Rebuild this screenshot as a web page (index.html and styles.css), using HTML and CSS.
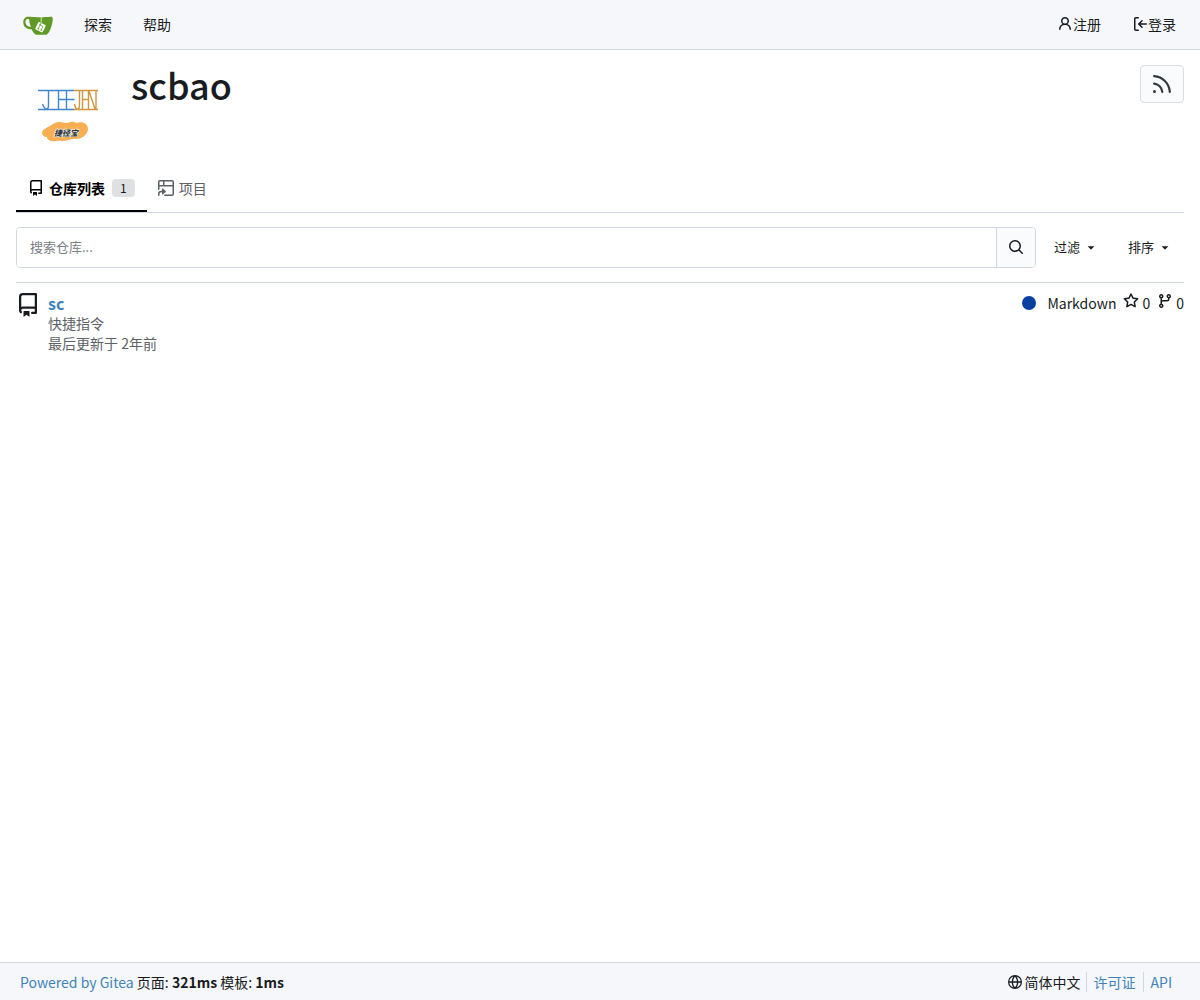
FILE: index.html
```html
<!DOCTYPE html>
<html lang="zh-CN">
  <head>
    <meta charset="utf-8">
    <meta name="viewport" content="width=device-width, initial-scale=1">
    <title>scbao - Gitea</title>
    <link rel="stylesheet" href="styles.css">
  </head>
  <body>
    <nav class="navbar" aria-label="导航栏">
      <div class="navbar-left">
        <a class="logo" href="#" aria-label="首页">
          <svg width="30" height="30" viewBox="0 0 640 640" aria-hidden="true">
            <path fill="#fff" d="m395.9 484.2-126.9-61c-12.5-6-17.9-21.2-11.8-33.8l61-126.9c6-12.5 21.2-17.9 33.8-11.8 17.2 8.3 27.1 13 27.1 13l-.1-109.2 16.7-.1.1 117.1s57.4 24.2 83.1 40.1c3.7 2.3 10.2 6.8 12.9 14.4 2.1 6.1 2 13.1-1 19.3l-61 126.9c-6.2 12.7-21.4 18.1-33.9 12"/>
            <path fill="#609926" d="M622.7 149.8c-4.1-4.1-9.6-4-9.6-4s-117.2 6.6-177.9 8c-13.3.3-26.5.6-39.6.7v117.2c-5.5-2.6-11.1-5.3-16.6-7.9 0-36.4-.1-109.2-.1-109.2-29 .4-89.2-2.2-89.2-2.2s-141.4-7.1-156.8-8.5c-9.8-.6-22.5-2.1-39 1.5-8.7 1.8-33.5 7.4-53.8 26.9C-4.9 212.4 6.6 276.2 8 285.8c1.7 11.7 6.9 44.2 31.7 72.5 45.8 56.1 144.4 54.8 144.4 54.8s12.1 28.9 30.6 55.5c25 33.1 50.7 58.9 75.7 62 63 0 188.9-.1 188.9-.1s12 .1 28.3-10.3c14-8.5 26.5-23.4 26.5-23.4S547 483 565 451.5c5.5-9.7 10.1-19.1 14.1-28 0 0 55.2-117.1 55.2-231.1-1.1-34.5-9.6-40.6-11.6-42.6M125.6 353.9c-25.9-8.5-36.9-18.7-36.9-18.7S69.6 321.8 60 295.4c-16.5-44.2-1.4-71.2-1.4-71.2s8.4-22.5 38.5-30c13.8-3.7 31-3.1 31-3.1s7.1 59.4 15.7 94.2c7.2 29.2 24.8 77.7 24.8 77.7s-26.1-3.1-43-9.1m300.3 107.6s-6.1 14.5-19.6 15.4c-5.8.4-10.3-1.2-10.3-1.2s-.3-.1-5.3-2.1l-112.9-55s-10.9-5.7-12.8-15.6c-2.2-8.1 2.7-18.1 2.7-18.1L322 273s4.8-9.7 12.2-13c.6-.3 2.3-1 4.5-1.5 8.1-2.1 18 2.8 18 2.8L467.4 315s12.6 5.7 15.3 16.2c1.9 7.4-.5 14-1.8 17.2-6.3 15.4-55 113.1-55 113.1"/>
            <path fill="#609926" d="M326.8 380.1c-8.2.1-15.4 5.8-17.3 13.8s2 16.3 9.1 20c7.7 4 17.5 1.8 22.7-5.4 5.1-7.1 4.3-16.9-1.8-23.1l24-49.1c1.5.1 3.7.2 6.2-.5 4.1-.9 7.1-3.6 7.1-3.6 4.2 1.8 8.6 3.8 13.2 6.1 4.8 2.4 9.3 4.9 13.4 7.3.9.5 1.8 1.1 2.8 1.9 1.6 1.3 3.4 3.1 4.7 5.5 1.9 5.5-1.9 14.9-1.9 14.9-2.3 7.6-18.4 40.6-18.4 40.6-8.1-.2-15.3 5-17.7 12.5-2.6 8.1 1.1 17.3 8.9 21.3s17.4 1.7 22.5-5.3c5-6.8 4.6-16.3-1.1-22.6 1.9-3.7 3.7-7.4 5.6-11.3 5-10.4 13.5-30.4 13.5-30.4.9-1.7 5.7-10.3 2.7-21.3-2.5-11.4-12.6-16.7-12.6-16.7-12.2-7.9-29.2-15.2-29.2-15.2s0-4.1-1.1-7.1c-1.1-3.1-2.8-5.1-3.9-6.3 4.7-9.7 9.4-19.3 14.1-29-4.1-2-8.1-4-12.2-6.1-4.8 9.8-9.7 19.7-14.5 29.5-6.7-.1-12.9 3.5-16.1 9.4-3.4 6.3-2.7 14.1 1.9 19.8z"/>
          </svg>
        </a>
        <a class="nav-item" href="#">探索</a>
        <a class="nav-item" href="#">帮助</a>
      </div>
      <div class="navbar-right">
        <a class="nav-item" href="#">
          <svg class="icon" viewBox="0 0 16 16" width="16" height="16" aria-hidden="true"><path d="M10.561 8.073a6 6 0 0 1 3.432 5.142.75.75 0 1 1-1.498.07 4.5 4.5 0 0 0-8.99 0 .75.75 0 0 1-1.498-.07 6 6 0 0 1 3.431-5.142 3.999 3.999 0 1 1 5.123 0M10.5 5a2.5 2.5 0 1 0-5 0 2.5 2.5 0 0 0 5 0"/></svg>
          注册
        </a>
        <a class="nav-item" href="#">
          <svg class="icon" viewBox="0 0 16 16" width="16" height="16" aria-hidden="true"><path d="M2 2.75C2 1.784 2.784 1 3.75 1h2.5a.75.75 0 0 1 0 1.5h-2.5a.25.25 0 0 0-.25.25v10.5c0 .138.112.25.25.25h2.5a.75.75 0 0 1 0 1.5h-2.5A1.75 1.75 0 0 1 2 13.25Zm6.56 4.5h5.69a.75.75 0 0 1 0 1.5H8.56l1.97 1.97a.749.749 0 0 1-.326 1.275.75.75 0 0 1-.734-.215L6.22 8.53a.75.75 0 0 1 0-1.06l3.25-3.25a.749.749 0 0 1 1.275.326.75.75 0 0 1-.215.734Z"/></svg>
          登录
        </a>
      </div>
    </nav>

    <main class="container">
      <header class="org-header">
        <svg class="avatar" width="100" height="100" viewBox="0 0 100 100" role="img" aria-label="scbao">
          <g fill="none" stroke-width="1.4">
            <path stroke="#3f86cf" d="M22 25.500h36M22 44.500h36M32.500 26v14q0 4-2 4t-4-5M42.500 26v18M50.500 26v18M42.500 34.500h16"/>
            <path stroke="#cf963f" d="M58 25.500h24M58 44.500h24M63.500 26v14q0 4-2 4t-3-5M66.500 26v18M72.500 26v18M66.500 34.500h6M73 26l6 18M80 26v18"/>
          </g>
          <path fill="#f8ae52" d="M26 68c0-4 7-6 11-9 6-4 10-1 14-1 5-1 6-2 9 0 6-2 12 0 12 6 0 5-6 10-12 10-4 0-5 0-8 1-5 2-9 0-12 1-5 1-9-1-9-4-3 0-5-2-5-4z"/>
          <text class="avatar-text" x="38" y="71">捷径宝</text>
        </svg>
        <h1>scbao</h1>
        <a class="rss-button" href="#" aria-label="RSS 订阅">
          <svg class="icon" viewBox="0 0 16 16" width="24" height="24" aria-hidden="true"><path d="M2.002 2.725a.75.75 0 0 1 .797-.699C8.79 2.42 13.58 7.21 13.974 13.201a.75.75 0 0 1-1.497.098 10.502 10.502 0 0 0-9.776-9.776.747.747 0 0 1-.7-.798ZM2.84 7.05h-.002a7.002 7.002 0 0 1 6.113 6.111.75.75 0 0 1-1.49.178 5.503 5.503 0 0 0-4.8-4.8.75.75 0 0 1 .179-1.489ZM2 13a1 1 0 1 1 2 0 1 1 0 0 1-2 0"/></svg>
        </a>
      </header>

      <nav class="tabs" aria-label="组织">
        <a class="tab active" href="#">
          <svg class="icon" viewBox="0 0 16 16" width="16" height="16" aria-hidden="true"><path d="M2 2.500A2.500 2.500 0 0 1 4.500 0h8.750a.75.75 0 0 1 .75.75v12.500a.75.75 0 0 1-.75.75h-2.500a.75.75 0 0 1 0-1.500h1.750v-2h-8a1 1 0 0 0-.714 1.700.75.75 0 1 1-1.072 1.050A2.500 2.500 0 0 1 2 11.500Zm10.500-1h-8a1 1 0 0 0-1 1v6.708A2.500 2.500 0 0 1 4.500 9h8ZM5 12.250a.25.25 0 0 1 .25-.25h3.500a.25.25 0 0 1 .25.25v3.250a.25.25 0 0 1-.4.200l-1.450-1.087a.25.25 0 0 0-.300 0L5.400 15.700a.25.25 0 0 1-.400-.200Z"/></svg>
          仓库列表 <span class="count">1</span>
        </a>
        <a class="tab" href="#">
          <svg class="icon" viewBox="0 0 16 16" width="16" height="16" aria-hidden="true"><path d="M1.750 0h12.500C15.216 0 16 .784 16 1.750v12.500A1.750 1.750 0 0 1 14.250 16h-7.500a.75.75 0 0 1 0-1.500h7.500a.25.25 0 0 0 .25-.25V6.500h-13v2.750a.75.75 0 0 1-1.500 0v-7.500C0 .784.784 0 1.750 0M6.500 5h8V1.750a.25.25 0 0 0-.25-.25H6.500ZM5 5V1.500H1.750a.25.25 0 0 0-.25.25V5ZM4.700 8.600l3 2.500a.5.5 0 0 1 0 .800l-3 2.500a.4.4 0 0 1-.700-.300v-1.850h-.750A1.750 1.750 0 0 0 1.500 14v1.250a.75.75 0 0 1-1.500 0V14a3.250 3.250 0 0 1 3.250-3.250H4V8.900a.4.4 0 0 1 .700-.300Z"/></svg>
          项目
        </a>
      </nav>

      <form class="search">
        <div class="search-box">
          <input type="search" name="q" placeholder="搜索仓库..." aria-label="搜索仓库">
          <button type="submit" aria-label="搜索">
            <svg class="icon" viewBox="0 0 16 16" width="16" height="16" aria-hidden="true"><path d="M10.680 11.740a6 6 0 0 1-7.922-8.982 6 6 0 0 1 8.982 7.922l3.040 3.040a.749.749 0 0 1-.326 1.275.749.749 0 0 1-.734-.215ZM11.500 7a4.499 4.499 0 1 0-8.997 0A4.499 4.499 0 0 0 11.500 7"/></svg>
          </button>
        </div>
        <button class="dropdown" type="button">过滤
          <svg class="icon" viewBox="0 0 16 16" width="14" height="14" aria-hidden="true"><path d="m4.427 7.427 3.396 3.396a.25.25 0 0 0 .354 0l3.396-3.396A.25.25 0 0 0 11.396 7H4.604a.25.25 0 0 0-.177.427"/></svg>
        </button>
        <button class="dropdown" type="button">排序
          <svg class="icon" viewBox="0 0 16 16" width="14" height="14" aria-hidden="true"><path d="m4.427 7.427 3.396 3.396a.25.25 0 0 0 .354 0l3.396-3.396A.25.25 0 0 0 11.396 7H4.604a.25.25 0 0 0-.177.427"/></svg>
        </button>
      </form>

      <section class="repo">
        <svg class="icon" viewBox="0 0 16 16" width="24" height="24" aria-hidden="true"><path d="M2 2.500A2.500 2.500 0 0 1 4.500 0h8.750a.75.75 0 0 1 .75.75v12.500a.75.75 0 0 1-.75.75h-2.500a.75.75 0 0 1 0-1.500h1.750v-2h-8a1 1 0 0 0-.714 1.700.75.75 0 1 1-1.072 1.050A2.500 2.500 0 0 1 2 11.500Zm10.500-1h-8a1 1 0 0 0-1 1v6.708A2.500 2.500 0 0 1 4.500 9h8ZM5 12.250a.25.25 0 0 1 .25-.25h3.500a.25.25 0 0 1 .25.25v3.250a.25.25 0 0 1-.4.200l-1.450-1.087a.25.25 0 0 0-.300 0L5.400 15.700a.25.25 0 0 1-.400-.200Z"/></svg>
        <div class="repo-main">
          <a class="repo-name" href="#">sc</a>
          <div>快捷指令</div>
          <div>最后更新于 2年前</div>
        </div>
        <div class="repo-stats">
          <span class="language"><i class="dot"></i>Markdown</span>
          <a class="stat" href="#" aria-label="点赞 0">
            <svg class="icon" viewBox="0 0 16 16" width="16" height="16" aria-hidden="true"><path d="M8 .25a.75.75 0 0 1 .673.418l1.882 3.815 4.210.612a.75.75 0 0 1 .416 1.279l-3.046 2.970.719 4.192a.751.751 0 0 1-1.088.791L8 12.347l-3.766 1.980a.75.75 0 0 1-1.088-.790l.720-4.194L.818 6.374a.75.75 0 0 1 .416-1.280l4.210-.611L7.327.668A.75.75 0 0 1 8 .25m0 2.445L6.615 5.500a.75.75 0 0 1-.564.410l-3.097.450 2.240 2.184a.75.75 0 0 1 .216.664l-.528 3.084 2.769-1.456a.75.75 0 0 1 .698 0l2.770 1.456-.530-3.084a.75.75 0 0 1 .216-.664l2.240-2.183-3.096-.450a.75.75 0 0 1-.564-.410Z"/></svg>
            <span>0</span>
          </a>
          <a class="stat" href="#" aria-label="派生 0">
            <svg class="icon" viewBox="0 0 16 16" width="16" height="16" aria-hidden="true"><path d="M9.500 3.250a2.250 2.250 0 1 1 3 2.122V6A2.500 2.500 0 0 1 10 8.500H6a1 1 0 0 0-1 1v1.128a2.251 2.251 0 1 1-1.500 0V5.372a2.250 2.250 0 1 1 1.500 0v1.836A2.500 2.500 0 0 1 6 7h4a1 1 0 0 0 1-1v-.628A2.250 2.250 0 0 1 9.500 3.250m-6 0a.75.75 0 1 0 1.500 0 .75.75 0 0 0-1.500 0m8.250-.750a.75.75 0 1 0 0 1.500.75.75 0 0 0 0-1.500M4.250 12a.75.75 0 1 0 0 1.500.75.75 0 0 0 0-1.500"/></svg>
            <span>0</span>
          </a>
        </div>
      </section>
    </main>

    <footer class="footer">
      <div>
        <a href="#">Powered by Gitea</a>
        页面: <strong>321ms</strong>
        模板: <strong>1ms</strong>
      </div>
      <div class="footer-links">
        <button class="language-menu" type="button">
          <svg class="icon" viewBox="0 0 16 16" width="14" height="14" aria-hidden="true"><path d="M8 0a8 8 0 1 1 0 16A8 8 0 0 1 8 0M5.780 8.750a9.640 9.640 0 0 0 1.363 4.177c.255.426.542.832.857 1.215.245-.296.551-.705.857-1.215A9.640 9.640 0 0 0 10.220 8.750Zm4.440-1.500a9.640 9.640 0 0 0-1.363-4.177c-.307-.510-.612-.919-.857-1.215a9.927 9.927 0 0 0-.857 1.215A9.640 9.640 0 0 0 5.780 7.250Zm-5.944 1.500H1.543a6.507 6.507 0 0 0 4.666 5.500c-.123-.181-.240-.365-.352-.552-.715-1.192-1.437-2.874-1.581-4.948m-2.733-1.500h2.733c.144-2.074.866-3.756 1.580-4.948.120-.197.237-.381.353-.552a6.507 6.507 0 0 0-4.666 5.500m10.181 1.500c-.144 2.074-.866 3.756-1.580 4.948-.120.197-.237.381-.353.552a6.507 6.507 0 0 0 4.666-5.500Zm2.733-1.500a6.507 6.507 0 0 0-4.666-5.500c.123.181.240.365.353.552.714 1.192 1.436 2.874 1.580 4.948Z"/></svg>
          简体中文
        </button>
        <a href="#">许可证</a>
        <a href="#">API</a>
      </div>
    </footer>
  </body>
</html>
```
FILE: styles.css
```css
* {
  box-sizing: border-box;
}

body {
  margin: 0;
  min-height: 100vh;
  display: flex;
  flex-direction: column;
  background: #fff;
  color: #181c21;
  font-family: "Noto Sans CJK SC", sans-serif;
  font-size: 14px;
  line-height: 20px;
}

a {
  color: #4183b8;
  text-decoration: none;
}

button,
input {
  font: inherit;
  color: inherit;
}

.icon {
  fill: currentColor;
  flex-shrink: 0;
}

/* top bar */
.navbar {
  display: flex;
  justify-content: space-between;
  height: 50px;
  padding: 0 8px;
  background: #f6f7fa;
  border-bottom: 1px solid #d0d7de;
}

.navbar-left,
.navbar-right {
  display: flex;
  align-items: center;
}

.navbar-left {
  gap: 3px;
}

.logo {
  display: flex;
  padding: 0 14px 0 15px;
}

.nav-item {
  display: flex;
  align-items: center;
  padding: 8px 16px 9px 15px;
  color: #181c21;
}

.navbar-left .nav-item {
  padding: 8px 14px 9px;
}

.nav-item:hover {
  background: #e8eaee;
}

/* organization header */
.container {
  flex: 1;
  padding: 15px 16px;
}

.org-header {
  display: flex;
  align-items: flex-start;
  gap: 15px;
}

.avatar-text {
  font-size: 8px;
  font-weight: 900;
  font-style: italic;
  fill: #333c3c;
  stroke: #fff;
  stroke-width: 1px;
  paint-order: stroke;
}

.org-header h1 {
  flex: 1;
  margin: 0;
  font-size: 36px;
  font-weight: 500;
  line-height: 38px;
}

.rss-button {
  display: flex;
  padding: 6px 9px;
  color: #33383d;
  background: #fafbfc;
  border: 1px solid #d8dce1;
  border-radius: 4px;
}

.tabs {
  display: flex;
  border-bottom: 1px solid #d0d7de;
}

.tab {
  display: flex;
  align-items: center;
  gap: 5px;
  height: 47px;
  padding: 0 12px;
  color: #5c6166;
  border-bottom: 2px solid transparent;
}

.tab.active {
  color: #000;
  font-weight: 700;
  border-color: #000;
}

.tab + .tab {
  padding-left: 11px;
}

.count {
  margin-left: 2px;
  padding: 0 8px;
  font-size: 12px;
  font-weight: 400;
  line-height: 18px;
  color: #181c21;
  background: #dfe0e2;
  border-radius: 4px;
}

/* search row */
.search {
  display: flex;
  align-items: center;
  padding: 14px 0;
  border-bottom: 1px solid #d0d7de;
  font-size: 13px;
}

.search-box {
  flex: 1;
  display: flex;
  height: 41px;
  border: 1px solid #d0d7de;
  border-radius: 4px;
  overflow: hidden;
}

.search-box input {
  flex: 1;
  min-width: 0;
  padding: 0 13px 2px;
  border: 0;
  outline: none;
  background: #fff;
}

.search-box input::placeholder {
  color: #7b8085;
}

.search-box button {
  display: flex;
  align-items: center;
  padding: 0 11px 1px;
  border: 0;
  border-left: 1px solid #d0d7de;
  background: #fafbfc;
  cursor: pointer;
}

.dropdown {
  display: flex;
  align-items: center;
  gap: 4px;
  padding: 8px 12px 9px 18px;
  border: 0;
  background: none;
  cursor: pointer;
}

/* repository list */
.repo {
  display: flex;
  align-items: flex-start;
  gap: 8px;
  padding: 10px 0;
  color: #5c6166;
}

.repo .icon {
  color: #181c21;
}

.repo-main {
  flex: 1;
}

.repo-name {
  display: block;
  font-size: 16px;
  font-weight: 700;
}

.repo-stats {
  display: flex;
  gap: 7px;
  color: #181c21;
}

.language,
.stat {
  display: flex;
  color: #181c21;
}

.stat {
  gap: 3px;
}

.language {
  align-items: center;
}

.dot {
  width: 14px;
  height: 14px;
  margin-right: 11px;
  border-radius: 50%;
  background: #083fa1;
}

.footer {
  display: flex;
  flex-wrap: wrap;
  align-items: center;
  justify-content: space-between;
  min-height: 38px;
  padding: 0 20px;
  background: #f6f7fa;
  border-top: 1px solid #d0d7de;
}

.footer-links {
  display: flex;
}

.footer-links > * {
  padding: 0 7px;
}

.footer-links > :last-child {
  padding-right: 8px;
}

.footer-links > * + * {
  border-left: 1px solid #d0d7de;
}

.language-menu {
  display: flex;
  align-items: center;
  gap: 3px;
  padding: 0 5px;
  border: 0;
  background: none;
  cursor: pointer;
}
```
